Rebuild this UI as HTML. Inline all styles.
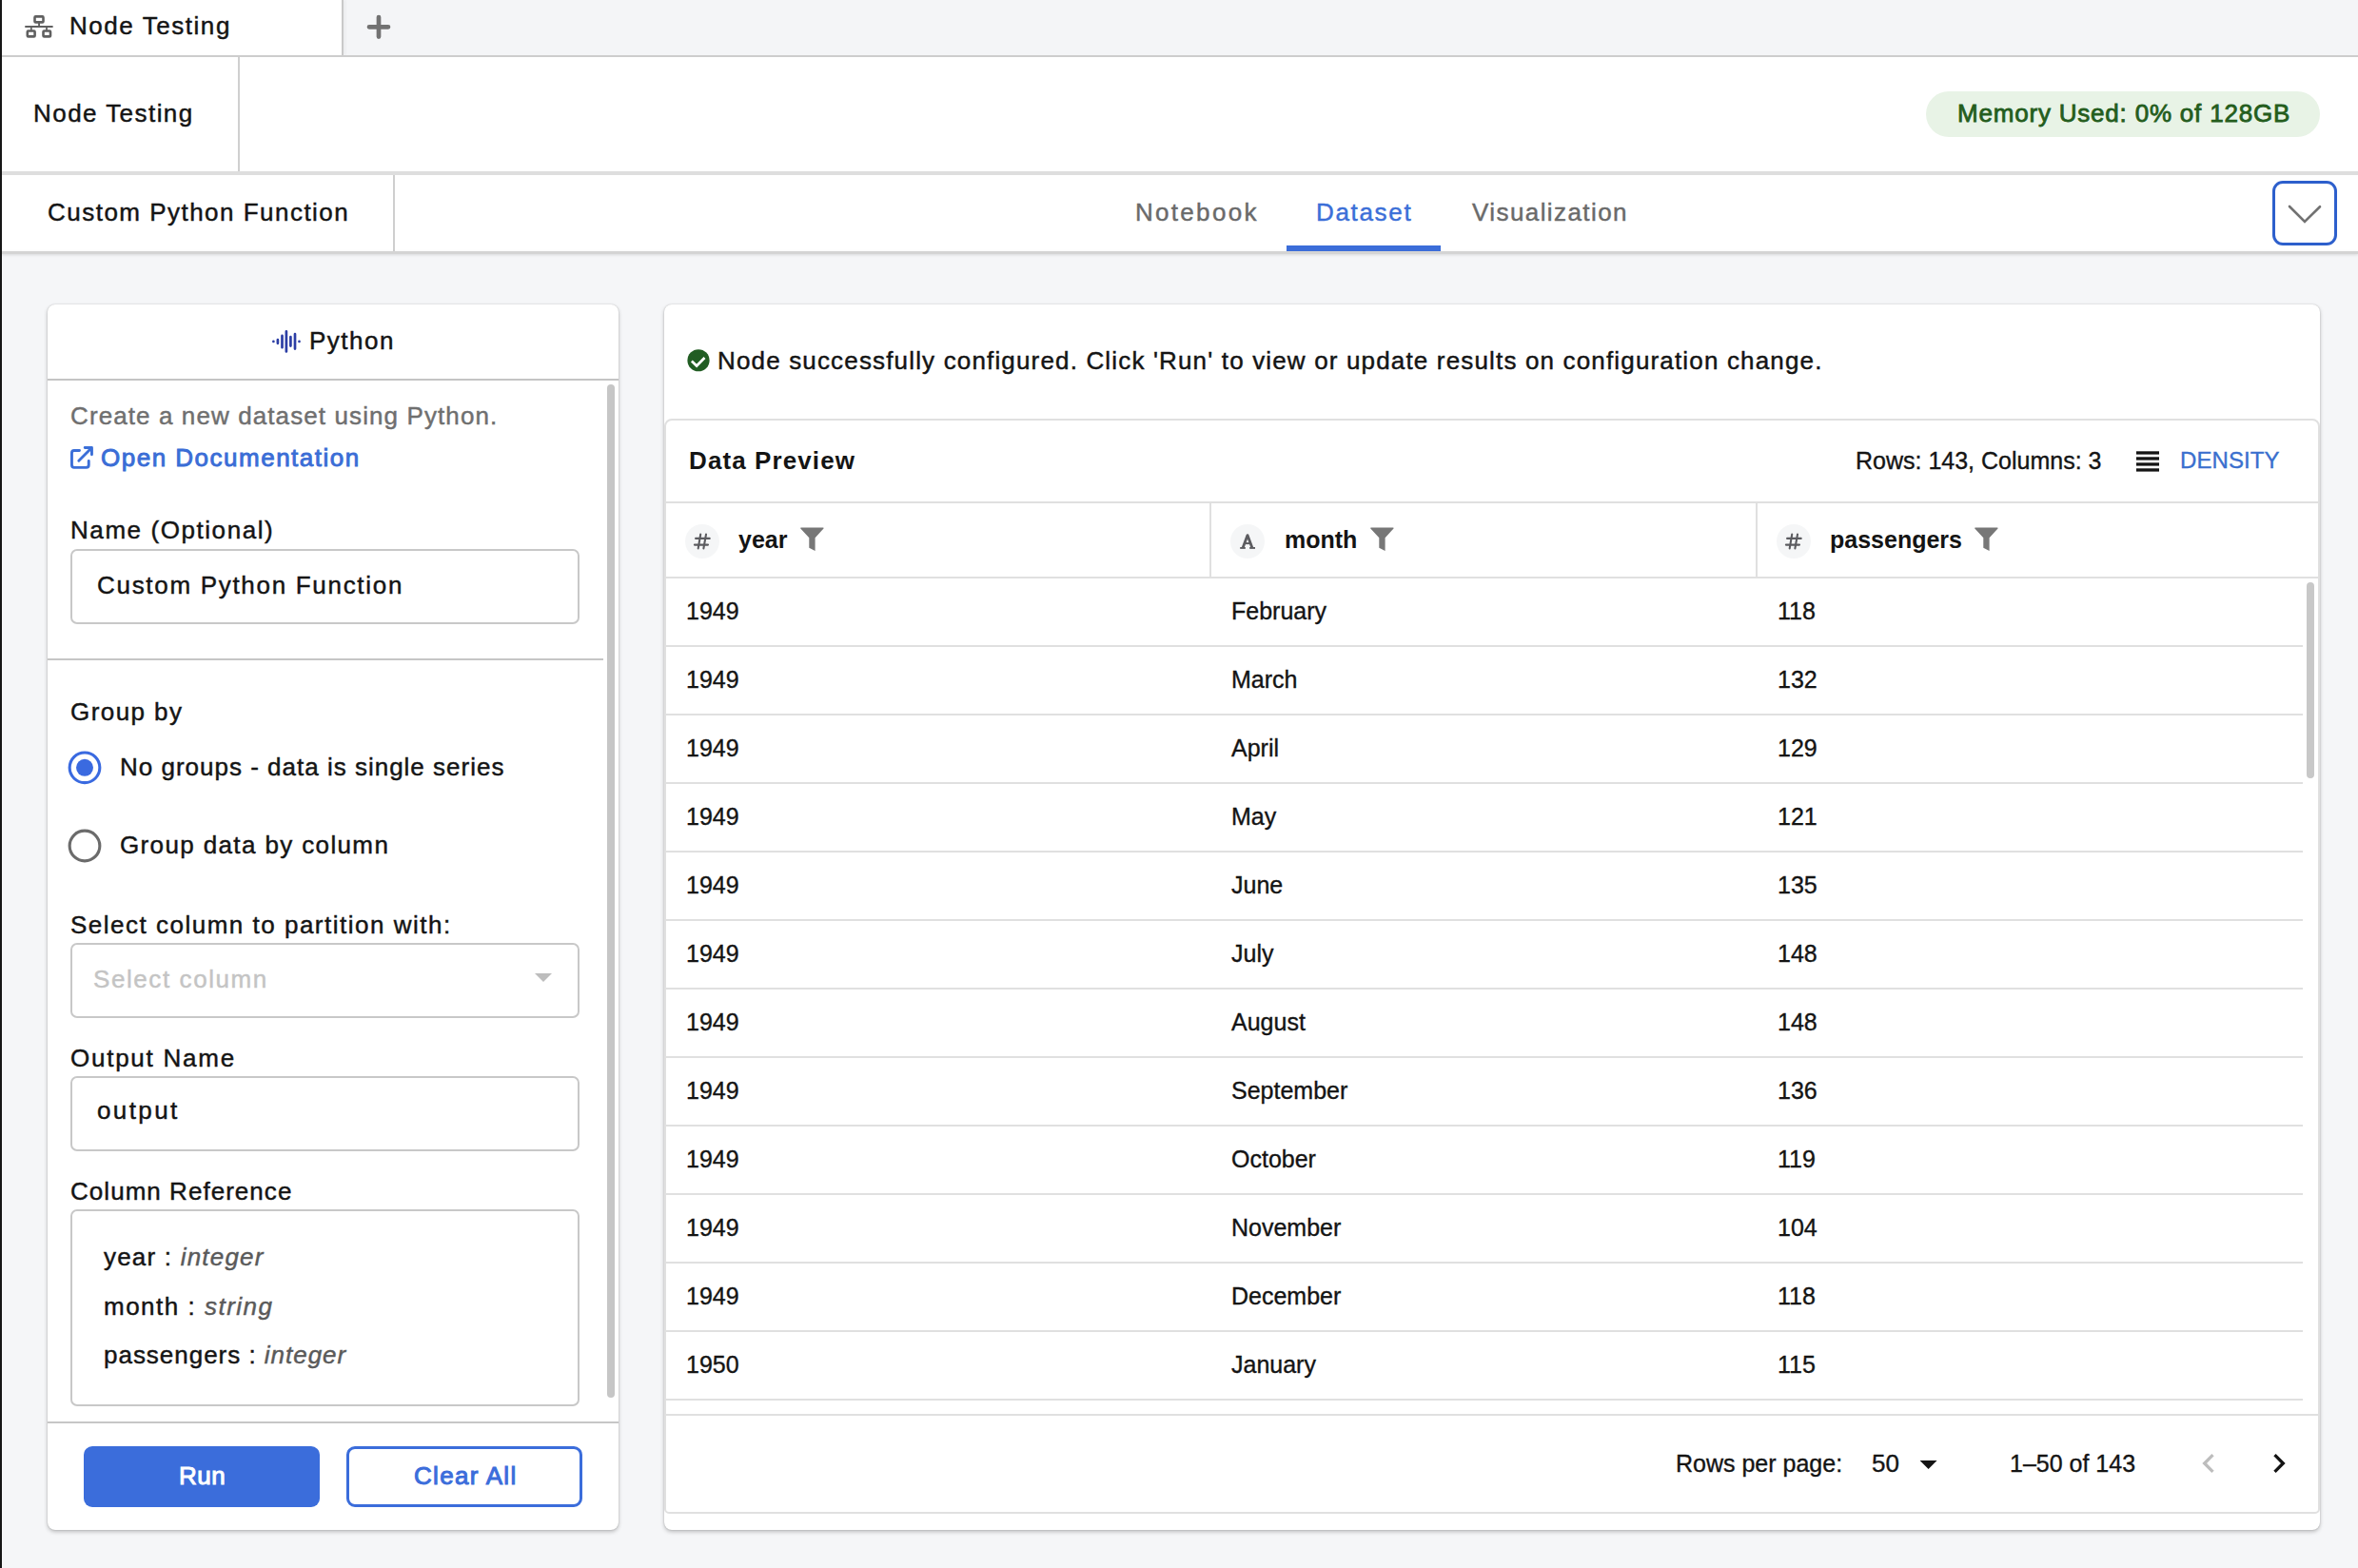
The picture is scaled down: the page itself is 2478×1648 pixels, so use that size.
<!DOCTYPE html>
<html>
<head>
<meta charset="utf-8">
<style>
*{box-sizing:border-box;margin:0;padding:0}
html,body{width:2478px;height:1648px;overflow:hidden}
body{position:relative;background:#f5f6f8;font-family:"Liberation Sans",sans-serif;color:#141414}
.a{position:absolute}
.t{position:absolute;white-space:nowrap;line-height:26px;font-size:26px;-webkit-text-stroke:0.45px currentColor}
.t i{color:#5a5a5a}
.t.b{font-weight:bold;-webkit-text-stroke:0}
.tb.b{-webkit-text-stroke:0}
.tb{position:absolute;white-space:nowrap;line-height:25px;font-size:25px;-webkit-text-stroke:0.35px currentColor}
</style>
</head>
<body>
<div class="a" style="left:0px;top:0px;width:2px;height:1648px;background:#161616"></div>
<div class="a" style="left:2px;top:0px;width:2476px;height:58px;background:#f4f5f7"></div>
<div class="a" style="left:2px;top:0px;width:357px;height:58px;background:#fff"></div>
<div class="a" style="left:359px;top:0px;width:2px;height:58px;background:#c9c9c9;box-shadow:2px 0 3px rgba(0,0,0,.06)"></div>
<div class="a" style="left:2px;top:58px;width:2476px;height:2px;background:#cdcdcd"></div>
<svg class="a" style="left:24px;top:14px" width="34" height="28" viewBox="0 0 34 28">
 <g fill="none" stroke="#606060" stroke-width="2.6">
  <rect x="12.5" y="3.4" width="9" height="6" rx="1"/>
  <rect x="4.8" y="18.5" width="7.8" height="5.9" rx="1"/>
  <rect x="21.5" y="18.5" width="7.5" height="5.9" rx="1"/>
 </g>
 <g fill="#606060">
  <rect x="16.1" y="10" width="1.9" height="4"/>
  <rect x="2" y="13" width="29.9" height="2" rx="1"/>
  <rect x="8" y="14" width="1.7" height="4"/>
  <rect x="24.1" y="14" width="1.8" height="4"/>
 </g>
</svg>
<svg class="a" style="left:385px;top:15px" width="26" height="26" viewBox="0 0 26 26"><path d="M13 3v20.6M3 13.3h20" stroke="#727272" stroke-width="4.7" stroke-linecap="round"/></svg>
<div class="a" style="left:2px;top:60px;width:2476px;height:121px;background:#fff"></div>
<div class="a" style="left:250px;top:60px;width:2px;height:121px;background:#cfcfcf"></div>
<div class="a" style="left:2px;top:180px;width:2476px;height:4px;background:#dedede"></div>
<div class="a" style="left:2024px;top:96px;width:414px;height:48px;border-radius:24px;background:#e8f3e6"></div>
<div class="a" style="left:2px;top:184px;width:2476px;height:80px;background:#fff"></div>
<div class="a" style="left:413px;top:184px;width:2px;height:80px;background:#cfcfcf"></div>
<div class="a" style="left:2px;top:264px;width:2476px;height:3px;background:#d4d4d4;box-shadow:0 1px 3px rgba(0,0,0,.12)"></div>
<div class="a" style="left:1352px;top:258px;width:162px;height:6px;background:#3b6dd9"></div>
<div class="a" style="left:2388px;top:190px;width:68px;height:68px;border:3.6px solid #2d5fcc;border-radius:11px;background:#fff"></div>
<svg class="a" style="left:2404px;top:215px" width="36" height="20" viewBox="0 0 36 20"><polyline points="2,2 18,18 34,2.2" fill="none" stroke="#727272" stroke-width="2.6" stroke-linecap="round"/></svg>
<div class="a" style="left:50px;top:320px;width:600px;height:1288px;background:#fff;border-radius:8px;box-shadow:0 2px 4px rgba(0,0,0,.24),0 0 1.5px rgba(0,0,0,.22)"></div>
<div class="a" style="left:698px;top:320px;width:1740px;height:1288px;background:#fff;border-radius:8px;box-shadow:0 2px 4px rgba(0,0,0,.24),0 0 1.5px rgba(0,0,0,.22)"></div>
<svg class="a" style="left:284px;top:345px" width="34" height="28" viewBox="0 0 34 28">
 <g stroke="#2c3ea5" stroke-width="2.7" stroke-linecap="round">
  <path d="M3.4 13.9v0.1M7.9 12.2v3.6M12.5 7.9v12.3M16.9 3.3v21.2M21.4 9.2v9.4M26 6.2v15.4M30.5 13.9v0.1"/>
 </g>
</svg>
<div class="a" style="left:50px;top:398px;width:600px;height:2px;background:#c4c4c4"></div>
<div class="a" style="left:638px;top:404px;width:8px;height:1065px;border-radius:4px;background:#c6c6c6"></div>
<svg class="a" style="left:72px;top:467px" width="28" height="28" viewBox="0 0 28 28">
 <g fill="none" stroke="#3b6fd8" stroke-width="2.9" stroke-linecap="round" stroke-linejoin="round">
  <path d="M11.5 6.45H5.95Q3.45 6.45 3.45 8.95V21.85Q3.45 24.35 5.95 24.35H18.75Q21.25 24.35 21.25 21.85V17.5"/>
  <path d="M17.2 3.55H24.45V10.8M24 4L10.8 17.2"/>
 </g>
</svg>
<div class="a" style="left:74px;top:577px;width:535px;height:79px;border:2px solid #c8c8c8;border-radius:7px"></div>
<div class="a" style="left:50px;top:692px;width:584px;height:2px;background:#c6c6c6"></div>
<svg class="a" style="left:70px;top:787px" width="38" height="124" viewBox="0 0 38 124">
 <circle cx="19" cy="19.8" r="15.85" fill="none" stroke="#3a6ae0" stroke-width="3.1"/>
 <circle cx="19" cy="19.8" r="9" fill="#3a6ae0"/>
 <circle cx="19" cy="102" r="15.85" fill="none" stroke="#6b6b6b" stroke-width="3.1"/>
</svg>
<div class="a" style="left:74px;top:991px;width:535px;height:79px;border:2px solid #c8c8c8;border-radius:7px"></div>
<svg class="a" style="left:561px;top:1022px" width="20" height="11" viewBox="0 0 20 11"><path d="M1 1h18L10 10z" fill="#bdbdbd"/></svg>
<div class="a" style="left:74px;top:1131px;width:535px;height:79px;border:2px solid #c8c8c8;border-radius:7px"></div>
<div class="a" style="left:74px;top:1271px;width:535px;height:207px;border:2px solid #c8c8c8;border-radius:7px"></div>
<div class="a" style="left:50px;top:1494px;width:600px;height:2px;background:#c6c6c6"></div>
<div class="a" style="left:88px;top:1520px;width:248px;height:64px;border-radius:9px;background:#3b6ddb"></div>
<div class="a" style="left:364px;top:1520px;width:248px;height:64px;border:3.8px solid #3b6ddb;border-radius:9px"></div>
<svg class="a" style="left:721px;top:366px" width="26" height="26" viewBox="0 0 26 26"><circle cx="13" cy="12.75" r="11.6" fill="#215d23"/><path d="M5.9 13.6l5.2 4.9 8.4-8.5" fill="none" stroke="#fff" stroke-width="2.7"/></svg>
<div class="a" style="left:698px;top:440px;width:1740px;height:1151px;border:2px solid #e0e0e0;border-radius:8px 8px 5px 5px"></div>
<svg class="a" style="left:2245px;top:474px" width="24" height="22" viewBox="0 0 24 22"><g fill="#141414"><rect x="0" y="0.3" width="24" height="3.3"/><rect x="0" y="6.3" width="24" height="3.3"/><rect x="0" y="12.3" width="24" height="3.3"/><rect x="0" y="18.3" width="24" height="3.3"/></g></svg>
<div class="a" style="left:700px;top:527px;width:1736px;height:2px;background:#e0e0e0"></div>
<div class="a" style="left:720px;top:551px;width:36px;height:36px;border-radius:50%;background:#f5f6f7"></div>
<svg class="a" style="left:726px;top:558px" width="24" height="22" viewBox="0 0 24 22"><g stroke="#5c5c60" stroke-width="2.1" stroke-linecap="round"><path d="M10.2 3.6L7.7 18.4M16 3.6L13.4 18.4M5.1 7.9H19.7M3.9 14.6H18"/></g></svg>
<svg class="a" style="left:840px;top:553px" width="27" height="27" viewBox="0 0 27 27"><path d="M1.6 1.4H25.2Q25.9 1.6 25.5 2.5L16.6 12.3V25.9L10.3 22.8V12.3L1.3 2.5Q0.9 1.6 1.6 1.4Z" fill="#777"/></svg>
<div class="a" style="left:1271px;top:529px;width:2px;height:78px;background:#e0e0e0"></div>
<div class="a" style="left:1293px;top:551px;width:36px;height:36px;border-radius:50%;background:#f5f6f7"></div>
<svg class="a" style="left:1300px;top:558px" width="22" height="22" viewBox="0 0 22 22"><g fill="none" stroke="#5c5c60" stroke-width="2.8" stroke-linejoin="round"><path d="M6.2 17.6L11 4.6L15.8 17.6"/><path d="M7.6 13.1H14.4" stroke-width="2"/></g><g fill="#5c5c60"><rect x="3.2" y="17" width="5.6" height="1.9"/><rect x="13.2" y="17" width="5.8" height="1.9"/></g></svg>
<svg class="a" style="left:1439px;top:553px" width="27" height="27" viewBox="0 0 27 27"><path d="M1.6 1.4H25.2Q25.9 1.6 25.5 2.5L16.6 12.3V25.9L10.3 22.8V12.3L1.3 2.5Q0.9 1.6 1.6 1.4Z" fill="#777"/></svg>
<div class="a" style="left:1845px;top:529px;width:2px;height:78px;background:#e0e0e0"></div>
<div class="a" style="left:1867px;top:551px;width:36px;height:36px;border-radius:50%;background:#f5f6f7"></div>
<svg class="a" style="left:1873px;top:558px" width="24" height="22" viewBox="0 0 24 22"><g stroke="#5c5c60" stroke-width="2.1" stroke-linecap="round"><path d="M10.2 3.6L7.7 18.4M16 3.6L13.4 18.4M5.1 7.9H19.7M3.9 14.6H18"/></g></svg>
<svg class="a" style="left:2074px;top:553px" width="27" height="27" viewBox="0 0 27 27"><path d="M1.6 1.4H25.2Q25.9 1.6 25.5 2.5L16.6 12.3V25.9L10.3 22.8V12.3L1.3 2.5Q0.9 1.6 1.6 1.4Z" fill="#777"/></svg>
<div class="a" style="left:700px;top:606px;width:1736px;height:2px;background:#e0e0e0"></div>
<div class="tb" style="left:721px;top:630px">1949</div>
<div class="tb" style="left:1294px;top:630px">February</div>
<div class="tb" style="left:1868px;top:630px">118</div>
<div class="a" style="left:700px;top:678px;width:1720px;height:2px;background:#e0e0e0"></div>
<div class="tb" style="left:721px;top:702px">1949</div>
<div class="tb" style="left:1294px;top:702px">March</div>
<div class="tb" style="left:1868px;top:702px">132</div>
<div class="a" style="left:700px;top:750px;width:1720px;height:2px;background:#e0e0e0"></div>
<div class="tb" style="left:721px;top:774px">1949</div>
<div class="tb" style="left:1294px;top:774px">April</div>
<div class="tb" style="left:1868px;top:774px">129</div>
<div class="a" style="left:700px;top:822px;width:1720px;height:2px;background:#e0e0e0"></div>
<div class="tb" style="left:721px;top:846px">1949</div>
<div class="tb" style="left:1294px;top:846px">May</div>
<div class="tb" style="left:1868px;top:846px">121</div>
<div class="a" style="left:700px;top:894px;width:1720px;height:2px;background:#e0e0e0"></div>
<div class="tb" style="left:721px;top:918px">1949</div>
<div class="tb" style="left:1294px;top:918px">June</div>
<div class="tb" style="left:1868px;top:918px">135</div>
<div class="a" style="left:700px;top:966px;width:1720px;height:2px;background:#e0e0e0"></div>
<div class="tb" style="left:721px;top:990px">1949</div>
<div class="tb" style="left:1294px;top:990px">July</div>
<div class="tb" style="left:1868px;top:990px">148</div>
<div class="a" style="left:700px;top:1038px;width:1720px;height:2px;background:#e0e0e0"></div>
<div class="tb" style="left:721px;top:1062px">1949</div>
<div class="tb" style="left:1294px;top:1062px">August</div>
<div class="tb" style="left:1868px;top:1062px">148</div>
<div class="a" style="left:700px;top:1110px;width:1720px;height:2px;background:#e0e0e0"></div>
<div class="tb" style="left:721px;top:1134px">1949</div>
<div class="tb" style="left:1294px;top:1134px">September</div>
<div class="tb" style="left:1868px;top:1134px">136</div>
<div class="a" style="left:700px;top:1182px;width:1720px;height:2px;background:#e0e0e0"></div>
<div class="tb" style="left:721px;top:1206px">1949</div>
<div class="tb" style="left:1294px;top:1206px">October</div>
<div class="tb" style="left:1868px;top:1206px">119</div>
<div class="a" style="left:700px;top:1254px;width:1720px;height:2px;background:#e0e0e0"></div>
<div class="tb" style="left:721px;top:1278px">1949</div>
<div class="tb" style="left:1294px;top:1278px">November</div>
<div class="tb" style="left:1868px;top:1278px">104</div>
<div class="a" style="left:700px;top:1326px;width:1720px;height:2px;background:#e0e0e0"></div>
<div class="tb" style="left:721px;top:1350px">1949</div>
<div class="tb" style="left:1294px;top:1350px">December</div>
<div class="tb" style="left:1868px;top:1350px">118</div>
<div class="a" style="left:700px;top:1398px;width:1720px;height:2px;background:#e0e0e0"></div>
<div class="tb" style="left:721px;top:1422px">1950</div>
<div class="tb" style="left:1294px;top:1422px">January</div>
<div class="tb" style="left:1868px;top:1422px">115</div>
<div class="a" style="left:700px;top:1470px;width:1720px;height:2px;background:#e0e0e0"></div>
<div class="a" style="left:2424px;top:612px;width:8px;height:206px;border-radius:4px;background:#c8c8c8"></div>
<div class="a" style="left:700px;top:1486px;width:1736px;height:2px;background:#e0e0e0"></div>
<svg class="a" style="left:2005px;top:1517px" width="43.2" height="43.2" viewBox="0 0 24 24"><path d="M7 10l5 5 5-5z" fill="#141414"/></svg>
<svg class="a" style="left:2301px;top:1518px" width="40" height="40" viewBox="0 0 24 24"><path d="M15.41 7.41 14 6l-6 6 6 6 1.41-1.41L10.83 12z" fill="#bdbdbd"/></svg>
<svg class="a" style="left:2375px;top:1518px" width="40" height="40" viewBox="0 0 24 24"><path d="M10 6 8.59 7.41 13.17 12l-4.58 4.59L10 18l6-6z" fill="#141414"/></svg>
<div class="t" id="t1" style="left:73px;top:14px;letter-spacing:1.55px">Node Testing</div>
<div class="t" id="t2" style="left:35px;top:106px;letter-spacing:1.45px">Node Testing</div>
<div class="t" id="t3" style="left:2057px;top:106px;color:#245d1d;letter-spacing:0.8px;-webkit-text-stroke:0.8px #245d1d">Memory Used: 0% of 128GB</div>
<div class="t" id="t4" style="left:50px;top:210px;letter-spacing:1.48px">Custom Python Function</div>
<div class="t" id="t5" style="left:1193px;top:210px;color:#6a6a6a;letter-spacing:2.3px">Notebook</div>
<div class="t" id="t6" style="left:1383px;top:210px;color:#3b6fd8;letter-spacing:1.67px">Dataset</div>
<div class="t" id="t7" style="left:1547px;top:210px;color:#6a6a6a;letter-spacing:1.42px">Visualization</div>
<div class="t" id="t8" style="left:325px;top:344.5px;letter-spacing:1.5px">Python</div>
<div class="t" id="t9" style="left:74px;top:424px;color:#6f6f6f;letter-spacing:1.1px">Create a new dataset using Python.</div>
<div class="t" id="t10" style="left:106px;top:468px;color:#3a6dd6;letter-spacing:1.5px;-webkit-text-stroke:0.9px #3a6dd6">Open Documentation</div>
<div class="t" id="t11" style="left:74px;top:544px;letter-spacing:1.57px">Name (Optional)</div>
<div class="t" id="t12" style="left:102px;top:602px;letter-spacing:1.7px">Custom Python Function</div>
<div class="t" id="t13" style="left:74px;top:734.5px;letter-spacing:1.43px">Group by</div>
<div class="t" id="t14" style="left:126px;top:793px;letter-spacing:1.0px">No groups - data is single series</div>
<div class="t" id="t15" style="left:126px;top:875px;letter-spacing:1.37px">Group data by column</div>
<div class="t" id="t16" style="left:74px;top:959px;letter-spacing:1.5px">Select column to partition with:</div>
<div class="t" id="t17" style="left:98px;top:1016px;color:#c4c4c4;letter-spacing:1.58px">Select column</div>
<div class="t" id="t18" style="left:74px;top:1098.5px;letter-spacing:1.75px">Output Name</div>
<div class="t" id="t19" style="left:102px;top:1154px;letter-spacing:2.4px">output</div>
<div class="t" id="t20" style="left:74px;top:1238.5px;letter-spacing:1.04px">Column Reference</div>
<div class="t" id="t21" style="left:109px;top:1308px;letter-spacing:1.2px">year : <i>integer</i></div>
<div class="t" id="t22" style="left:109px;top:1360px;letter-spacing:1.5px">month : <i>string</i></div>
<div class="t" id="t23" style="left:109px;top:1411px;letter-spacing:0.98px">passengers : <i>integer</i></div>
<div class="t" id="t24" style="left:188px;top:1538px;color:#fff;letter-spacing:0.5px;-webkit-text-stroke:1px #fff">Run</div>
<div class="t" id="t25" style="left:435px;top:1538px;color:#3b6ddb;letter-spacing:1.3px;-webkit-text-stroke:1px #3b6ddb">Clear All</div>
<div class="t" id="t26" style="left:754px;top:366px;letter-spacing:1.16px">Node successfully configured. Click 'Run' to view or update results on configuration change.</div>
<div class="t b" id="t27" style="left:724px;top:471px;font-weight:bold;letter-spacing:1.1px">Data Preview</div>
<div class="tb" id="t28" style="left:1950px;top:472px;">Rows: 143, Columns: 3</div>
<div class="tb" id="t29" style="left:2291px;top:471px;color:#3a6fce;font-size:24px;letter-spacing:0.1px">DENSITY</div>
<div class="tb b" id="t30" style="left:776px;top:555px;font-weight:bold">year</div>
<div class="tb b" id="t31" style="left:1350px;top:555px;font-weight:bold">month</div>
<div class="tb b" id="t32" style="left:1923px;top:555px;font-weight:bold">passengers</div>
<div class="tb" id="t33" style="left:1761px;top:1526px;">Rows per page:</div>
<div class="tb" id="t34" style="left:1967px;top:1525.5px;font-size:26px">50</div>
<div class="tb" id="t35" style="left:2112px;top:1526px;">1–50 of 143</div>
</body>
</html>
